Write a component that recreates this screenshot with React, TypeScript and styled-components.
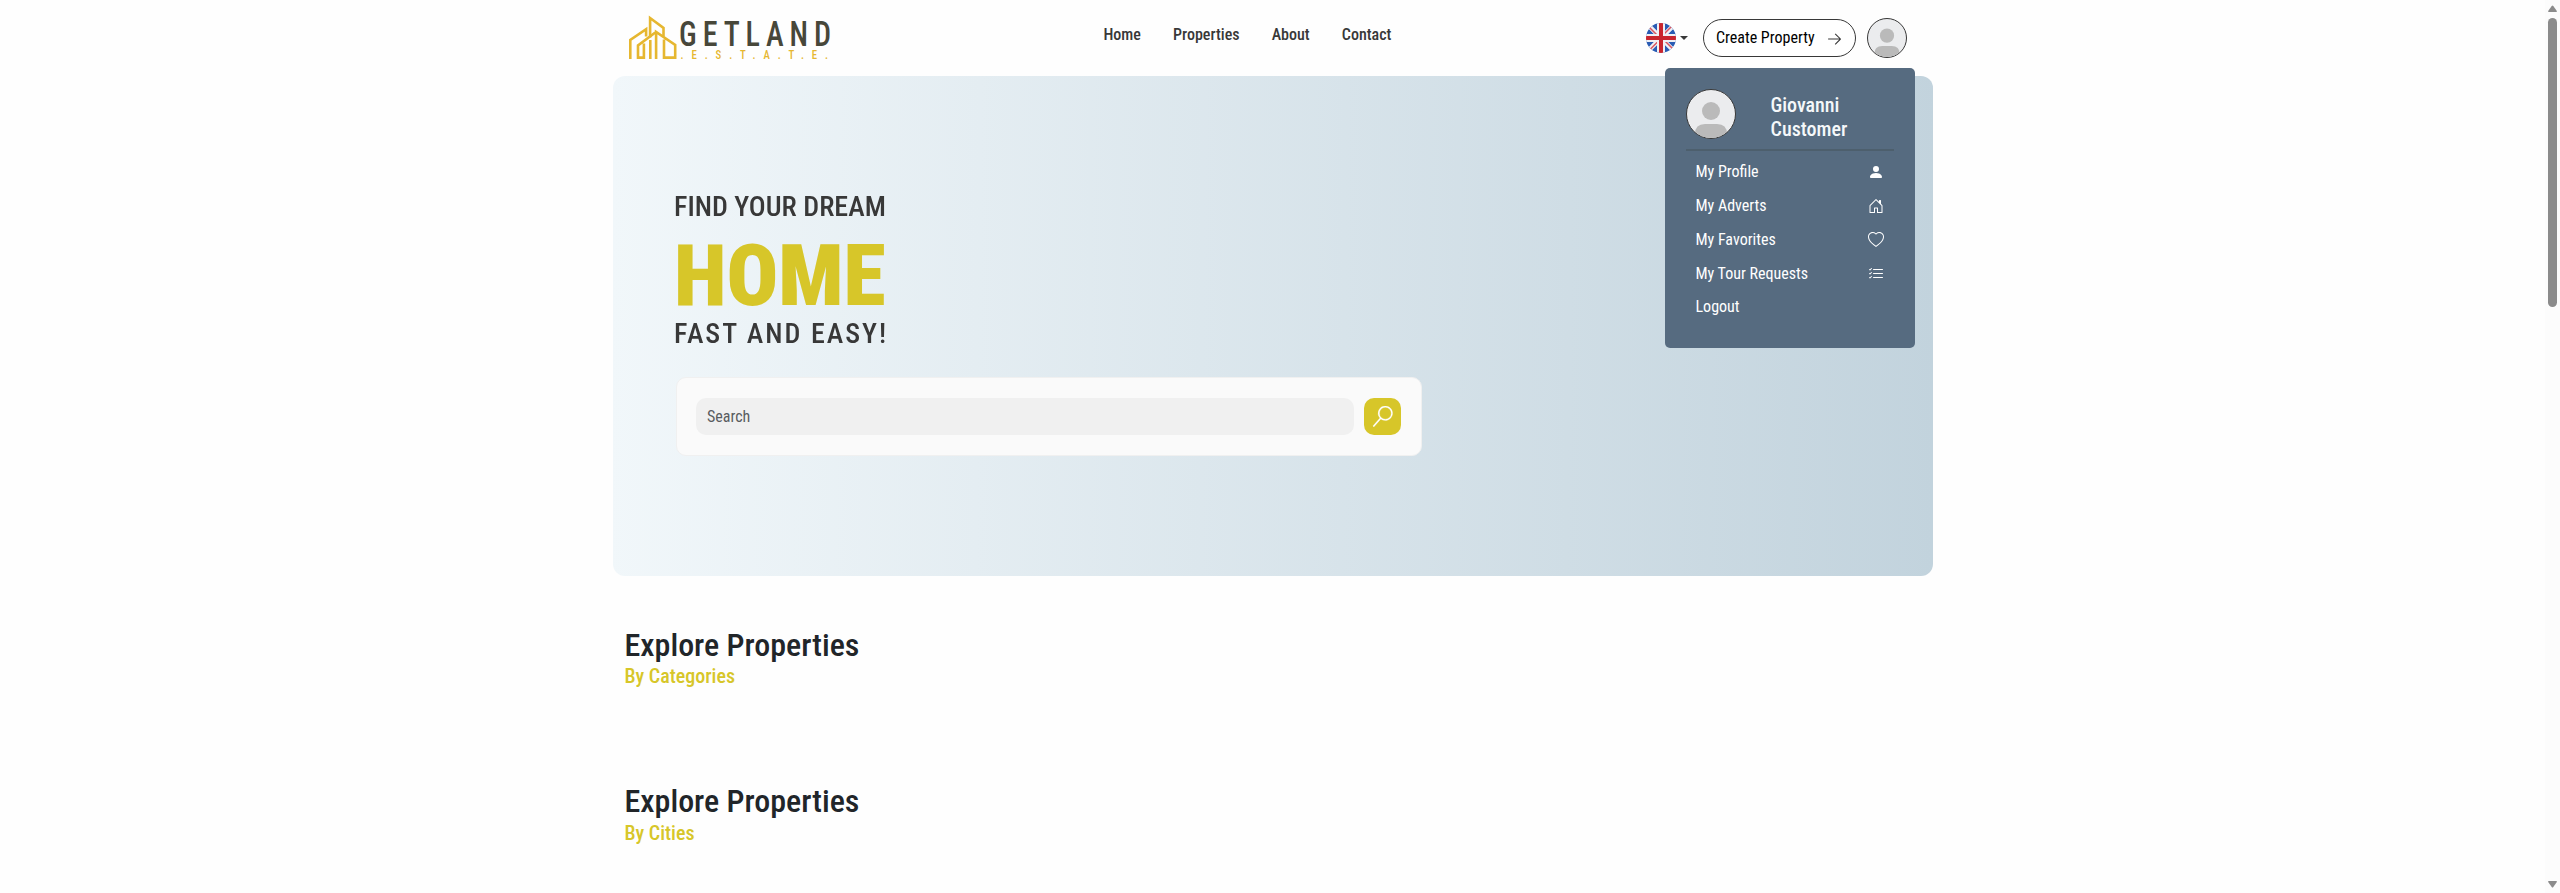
import React from "react";
import styled, { createGlobalStyle } from "styled-components";
import { VscSearch, VscArrowRight } from "react-icons/vsc";
import { BsPersonFill, BsHouseDoor, BsHeart, BsListCheck } from "react-icons/bs";

const GlobalStyle = createGlobalStyle`
  *, *::before, *::after { box-sizing: border-box; }
  body {
    margin: 0;
    background: #fefefe;
    color: #212529;
    font-family: "Roboto Condensed", Roboto, sans-serif;
    font-stretch: 75%;
    font-size: 16px;
    line-height: 24px;
    overflow: hidden;
  }
  button, input { font: inherit; font-stretch: 75%; }
  h1, h2, p { margin: 0; }
`;

const Page = styled.div`
  display: flex;
  height: 893px;
`;

const Main = styled.main`
  flex: 1;
  display: flex;
  flex-direction: column;
  align-items: center;
`;

const Container = styled.div`
  position: relative;
  width: 1320px;
`;

const Header = styled.header`
  display: flex;
  align-items: flex-start;
  height: 76px;
`;

const Logo = styled.a`
  display: block;
  height: 76px;
  width: 240px;
`;

const Nav = styled.nav`
  display: flex;
  gap: 32.2px;
  margin: 23px 0 0 251px;
`;

const NavLink = styled.a`
  color: #383838;
  font-weight: 500;
`;

const Actions = styled.div`
  display: flex;
  align-items: center;
  margin: 18px 25.5px 0 auto;
  height: 40px;
`;

const Language = styled.button`
  display: flex;
  align-items: center;
  gap: 4px;
  padding: 0;
  border: 0;
  background: none;
`;

const Caret = styled.span`
  width: 8px;
  border: 4px solid transparent;
  border-top-color: #383838;
  border-bottom: 0;
`;

const CreateButton = styled.button`
  display: flex;
  align-items: center;
  justify-content: space-between;
  width: 153px;
  height: 38px;
  margin: 0 11px 0 15px;
  padding: 0 12px;
  border: 1px solid #383838;
  border-radius: 19px;
  background: #fff;
  color: #000;

  span { margin-top: -1px; }
  svg { margin-top: 1px; color: #383838; }
`;

const AvatarFrame = styled.span<{ $size: number }>`
  display: block;
  flex: none;
  width: ${(p) => p.$size}px;
  height: ${(p) => p.$size}px;
  border: 1px solid #383838;
  border-radius: 50%;
  overflow: hidden;
  background: #ebecee;

  svg { display: block; width: 100%; height: 100%; }
`;

const Hero = styled.section`
  height: 500px;
  padding: 114px 62px 0 61.5px;
  border-radius: 12px;
  background: linear-gradient(90.5deg, #f1f7fa 0%, #c2d3dd 100%);
`;

const HeroLine = styled.p<{ $spacing: number }>`
  height: 40px;
  line-height: 33px;
  font-size: 28px;
  font-weight: 500;
  letter-spacing: ${(p) => p.$spacing}px;
  color: #383838;
  will-change: transform;
`;

const HeroWord = styled.h1`
  height: 87px;
  line-height: 91px;
  font-size: 86px;
  font-weight: 900;
  color: #d7c629;
  will-change: transform;
`;

const SearchBox = styled.form`
  display: flex;
  gap: 10px;
  width: 746.5px;
  height: 79px;
  margin: 20px 0 0 1.5px;
  padding: 20px 20px 20px 19px;
  border: 1px solid #f0f0f0;
  border-radius: 10px;
  background: #fafafa;
`;

const SearchInput = styled.input`
  flex: 1;
  height: 37px;
  padding: 0 11.5px;
  border: 0;
  border-radius: 10px;
  background: #f0f0f0;
  color: #595c5f;

  &::placeholder { color: #595c5f; opacity: 1; }
`;

const SearchButton = styled.button`
  display: grid;
  place-items: center;
  width: 37px;
  height: 37px;
  padding: 0;
  border: 0;
  border-radius: 10px;
  background: #d7c629;
  color: #fff;

  svg { stroke: #fff; stroke-width: 0.3; }
`;

const Explore = styled.section<{ $top: number }>`
  margin-top: ${(p) => p.$top}px;
  padding-left: 12px;
`;

const ExploreTitle = styled.h2`
  font-size: 32px;
  line-height: 38.4px;
  font-weight: 500;
`;

const ExploreSub = styled.p`
  font-size: 20px;
  line-height: 24px;
  font-weight: 500;
  color: #d7c629;
`;

const Menu = styled.aside`
  position: absolute;
  top: 68px;
  right: 17.5px;
  width: 250px;
  height: 280px;
  padding: 21px;
  border-radius: 5px;
  background: #566b80;
  color: #fff;
`;

const MenuHead = styled.div`
  display: flex;
  align-items: flex-start;
  gap: 34.5px;
  height: 60px;
  font-size: 20px;
  font-weight: 500;
  color: #f5f8fa;
`;

const Divider = styled.div`
  width: 208px;
  height: 2px;
  background: #4d5f6d;
`;

const MenuName = styled.span`
  width: 90px;
  margin-top: 4px;
`;

const MenuList = styled.ul`
  margin: 4px 0 0;
  padding: 0 10px 0 9.5px;
  list-style: none;
`;

const MenuItem = styled.li`
  display: flex;
  align-items: center;
  justify-content: space-between;
  height: 34px;

  &:last-child { height: 32px; }
`;

const Scrollbar = styled.div`
  display: flex;
  flex-direction: column;
  align-items: center;
  width: 15px;
  padding: 5px 0;
  background: #fcfcfc;
`;

const Thumb = styled.div`
  width: 9px;
  height: 289px;
  margin: 6px 0 auto;
  border-radius: 5px;
  background: #8b8b8b;
`;

function Arrow({ down = false }: { down?: boolean }) {
  return (
    <svg width="9" height="7" viewBox="0 0 9 7" fill="#8b8b8b">
      <path d={down ? "M0 .8Q0 0 1 0H8Q9 0 9 .8L5.3 6Q4.5 7 3.7 6Z" : "M0 6.2Q0 7 1 7H8Q9 7 9 6.2L5.3 1Q4.5 0 3.7 1Z"} />
    </svg>
  );
}

function Avatar({ size }: { size: number }) {
  return (
    <AvatarFrame $size={size}>
      <svg viewBox="0 0 48 48" fill="#bababa">
        <circle cx="24" cy="21" r="9" />
        <path d="M8 48v-4q0-10 10-10h12q10 0 10 10v4Z" />
      </svg>
    </AvatarFrame>
  );
}

function Flag() {
  return (
    <svg width="30" height="30" viewBox="0 0 30 30">
      <clipPath id="round"><circle cx="15" cy="15" r="15" /></clipPath>
      <g clipPath="url(#round)">
        <rect width="30" height="30" fill="#2a5cb4" />
        <path d="M0 0L30 30M30 0L0 30" stroke="#f0f0f4" strokeWidth="4.5" />
        <path d="M3 4L12 13M26 3L17 12M3.5 27L13 17.5M18 17L27 26" stroke="#d85560" strokeWidth="1.5" />
        <path d="M15 0V30M0 15H30" stroke="#f0f0f4" strokeWidth="8" />
        <path d="M15 0V30M0 15H30" stroke="#c9252e" strokeWidth="4" />
      </g>
    </svg>
  );
}

function LogoMark() {
  return (
    <svg width="240" height="76" viewBox="612.5 0 240 76">
      <g fill="none" stroke="#e6b730" strokeWidth="2.6">
        <path d="M629.8 59V40L645.6 29.2V36.5" />
        <path d="M643.4 43.5V57.6H637.5V45.5L654.8 32.5" />
        <path d="M649.6 37.5V18L663 28V36.5" />
        <path d="M649.8 59V40" />
        <path d="M655.6 59V32L674.7 45V57.6H663.5V39.5" />
      </g>
      <text
        transform="translate(678.6 46.4) scale(.86 1)"
        fontSize="35"
        fontWeight="500"
        letterSpacing="6.8"
        fill="#47473a"
      >
        GETLAND
      </text>
      <text
        transform="translate(680 59.2) scale(.9 1)"
        fontSize="12"
        fontWeight="500"
        textLength="164"
        lengthAdjust="spacing"
        fill="#e6b730"
      >
        .E.S.T.A.T.E.
      </text>
    </svg>
  );
}

const links = ["Home", "Properties", "About", "Contact"];

const menuItems = [
  { label: "My Profile", Icon: BsPersonFill },
  { label: "My Adverts", Icon: BsHouseDoor },
  { label: "My Favorites", Icon: BsHeart },
  { label: "My Tour Requests", Icon: BsListCheck },
  { label: "Logout", Icon: null },
];

export default function App() {
  return (
    <Page>
      <GlobalStyle />
      <Main>
        <Container>
          <Header>
            <Logo><LogoMark /></Logo>
            <Nav>{links.map((l) => <NavLink key={l}>{l}</NavLink>)}</Nav>
            <Actions>
              <Language><Flag /><Caret /></Language>
              <CreateButton><span>Create Property</span><VscArrowRight size={17} /></CreateButton>
              <Avatar size={40} />
            </Actions>
          </Header>
          <Hero>
            <HeroLine $spacing={0}>FIND YOUR DREAM</HeroLine>
            <HeroWord>HOME</HeroWord>
            <HeroLine $spacing={2}>FAST AND EASY!</HeroLine>
            <SearchBox>
              <SearchInput placeholder="Search" />
              <SearchButton type="button"><VscSearch size={21} /></SearchButton>
            </SearchBox>
          </Hero>
          <Explore $top={50}>
            <ExploreTitle>Explore Properties</ExploreTitle>
            <ExploreSub>By Categories</ExploreSub>
          </Explore>
          <Explore $top={94}>
            <ExploreTitle>Explore Properties</ExploreTitle>
            <ExploreSub>By Cities</ExploreSub>
          </Explore>
          <Menu>
            <MenuHead>
              <Avatar size={50} />
              <MenuName>Giovanni Customer</MenuName>
            </MenuHead>
            <Divider />
            <MenuList>
              {menuItems.map(({ label, Icon }) => (
                <MenuItem key={label}>{label}{Icon && <Icon size={16} />}</MenuItem>
              ))}
            </MenuList>
          </Menu>
        </Container>
      </Main>
      <Scrollbar><Arrow /><Thumb /><Arrow down /></Scrollbar>
    </Page>
  );
}
